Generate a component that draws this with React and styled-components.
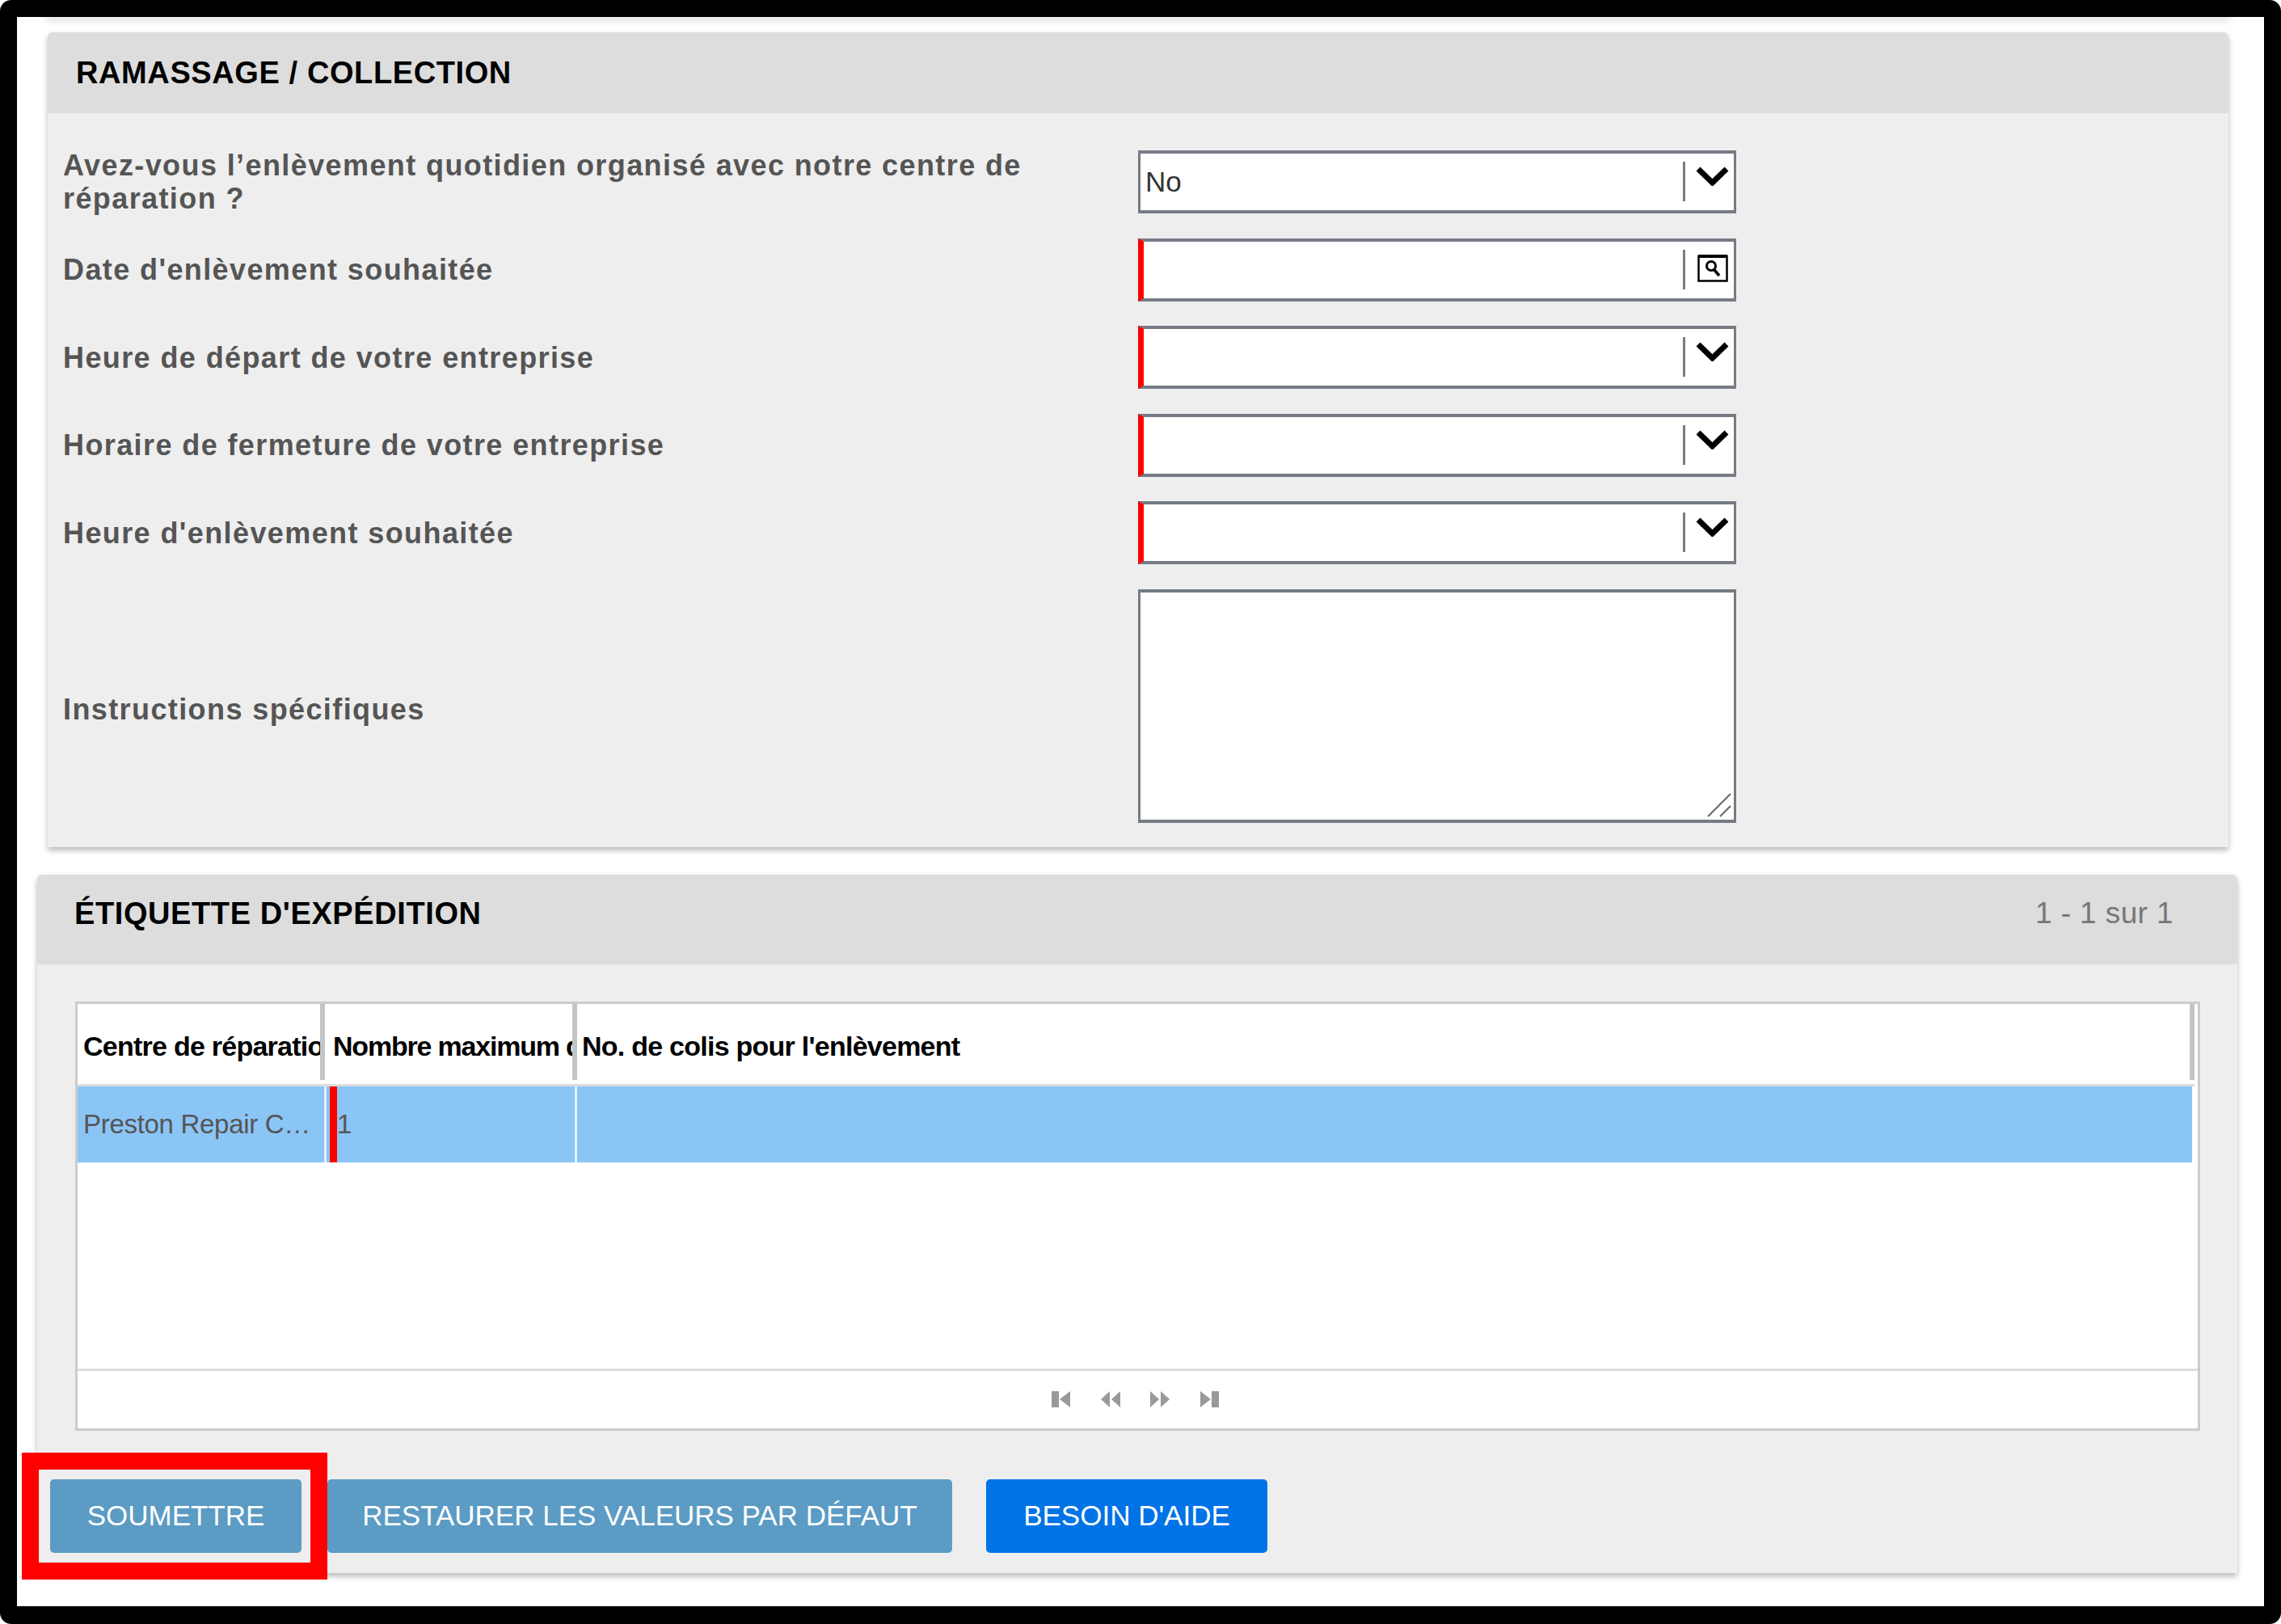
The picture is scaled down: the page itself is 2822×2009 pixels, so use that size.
import React from 'react';
import styled, { createGlobalStyle } from 'styled-components';

const Global = createGlobalStyle`
  html, body { margin: 0; padding: 0; background: #fff; }
  body { font-family: "Liberation Sans", Arial, sans-serif; }
  * { box-sizing: border-box; }
`;

const Frame = styled.div`
  position: relative;
  width: 2822px;
  height: 2009px;
  background: #fff;
  border: solid #000;
  border-width: 21px 21px 22px 21px;
  border-radius: 14px;
  overflow: hidden;
`;

const PrevPanelEdge = styled.div`
  height: 0;
  margin: 0 44px 19px 38px;
  box-shadow: 0 2px 9px 2px rgba(0, 0, 0, 0.22);
`;

const Panel = styled.section`
  margin: ${p => p.$wide ? '34px 33px 0 25px' : '0 44px 0 38px'};
  background: #eee;
  border-radius: 6px 6px 0 0;
  box-shadow: 0 4px 7px rgba(0, 0, 0, 0.28);
`;

const PanelHeader = styled.header`
  display: flex;
  align-items: center;
  justify-content: space-between;
  height: ${p => p.$wide ? '111px' : '100px'};
  padding: ${p => p.$wide ? '0 79px 14px 46px' : '0 0 0 35px'};
  background: #ddd;
  border-radius: 6px 6px 0 0;
`;

const PanelTitle = styled.h2`
  margin: 0;
  font-size: 38px;
  font-weight: 700;
  color: #000;
  letter-spacing: 0.6px;
  white-space: nowrap;
`;

const PageCount = styled.span`
  font-size: 37px;
  letter-spacing: 0.4px;
  color: #777;
  white-space: nowrap;
`;

const FormGrid = styled.div`
  display: grid;
  grid-template-columns: 1330px 740px;
  grid-template-rows: repeat(5, 78px) auto;
  row-gap: 30.5px;
  align-items: center;
  padding: 46px 0 30px 19px;
`;

const Label = styled.label`
  font-size: 36px;
  line-height: 41px;
  font-weight: 700;
  color: #555;
  letter-spacing: 1.4px;
  padding-right: 40px;
  padding-top: ${p => p.$drop || 0}px;
`;

const Field = styled.div`
  display: flex;
  align-items: flex-start;
  height: 78px;
  background: #fff;
  border: solid #767b85;
  border-width: 4px 3px;
  border-left: ${p => p.$required ? '7px solid #f00' : '3px solid #767b85'};
`;

const FieldValue = styled.div`
  flex: 1;
  align-self: center;
  padding-left: ${p => p.$required ? '2px' : '6px'};
  font-size: 35px;
  color: #333;
`;

const FieldDivider = styled.span`
  width: 3px;
  height: 49px;
  margin-top: 10px;
  background: #767b85;
`;

const IconSlot = styled.span`
  display: flex;
  justify-content: flex-start;
  width: 60px;
  padding: ${p => p.$top}px 0 0 ${p => p.$left}px;
`;

const TextBox = styled.div`
  position: relative;
  height: 289px;
  background: #fff;
  border: solid #767b85;
  border-width: 4px 3px;
`;

const Grip = styled.svg`
  position: absolute;
  right: 2px;
  bottom: 2px;
`;

const GridBox = styled.div`
  display: flex;
  flex-direction: column;
  height: 531px;
  margin: 46px 46px 0 47px;
  background: #fff;
  border: 3px solid #ccc;
`;

const HeadRow = styled.div`
  display: flex;
  height: 102px;
  margin-right: 4px;
  border-bottom: 3px solid #ddd;
`;

const HeadCell = styled.div`
  flex: ${p => p.$width ? `0 0 ${p.$width}px` : '1'};
  height: 94px;
  padding: 12px 0 0 ${p => p.$pad}px;
  display: flex;
  align-items: center;
  overflow: hidden;
  white-space: nowrap;
  font-size: 34px;
  letter-spacing: ${p => p.$tight ? '-1.2px' : '-0.75px'};
  font-weight: 700;
  color: #000;
  border-right: 6px solid #c4c4c4;
`;

const DataRow = styled.div`
  display: flex;
  height: 94px;
  margin-right: 7px;
  background: #8bc5f6;
`;

const DataCell = styled.div`
  flex: ${p => p.$width ? `0 0 ${p.$width}px` : '1'};
  display: flex;
  align-items: center;
  min-width: 0;
  border-right: ${p => p.$last ? '0' : '3px solid #e6f0fa'};
  border-left: ${p => p.$required ? '9px solid #f00' : '0'};
  margin-left: ${p => p.$required ? '4px' : '0'};
  padding-left: ${p => p.$pad}px;
  font-size: 33px;
  letter-spacing: -0.3px;
  color: #555;
`;

const CellText = styled.span`
  display: block;
  overflow: hidden;
  white-space: nowrap;
  text-overflow: ellipsis;
  padding-right: 6px;
`;

const GridBody = styled.div`
  flex: 1;
`;

const Pager = styled.div`
  display: flex;
  align-items: center;
  justify-content: center;
  gap: 35px;
  height: 74px;
  padding-right: 7px;
  border-top: 3px solid #ddd;
`;

const Actions = styled.div`
  display: flex;
  align-items: stretch;
  padding: 60px 0 25px 16px;
`;

const Button = styled.button`
  height: 91px;
  margin-right: ${p => p.$gap}px;
  padding: 0;
  width: ${p => p.$width}px;
  border: 0;
  border-radius: 5px;
  background: ${p => p.$primary ? '#0073e6' : '#5b9bc4'};
  color: #fff;
  font-family: inherit;
  font-size: 35px;
  white-space: nowrap;
`;

const Callout = styled.div`
  position: absolute;
  left: 6px;
  top: 1776px;
  width: 378px;
  height: 157px;
  border: 21px solid #f00;
  pointer-events: none;
`;

const Chevron = () => (
  <svg width="41" height="24" viewBox="0 0 41 24">
    <path d="M3 3 L20.5 20 L38 3" fill="none" stroke="#000" strokeWidth="7" />
  </svg>
);

const Lookup = () => (
  <svg width="38" height="35" viewBox="0 0 38 35">
    <rect x="1.5" y="3" width="35" height="30.5" fill="#fff" stroke="#000" strokeWidth="2.5" />
    <rect x="1" y="1" width="36" height="4" fill="#000" />
    <circle cx="17" cy="15" r="5.5" fill="none" stroke="#000" strokeWidth="3" />
    <path d="M21 20 L27 27" stroke="#000" strokeWidth="3.5" />
  </svg>
);

const PagerIcon = ({ points, bar }) => (
  <svg width="26" height="20" viewBox="0 0 26 20" fill="#9a9a9a">
    {bar != null && <rect x={bar} y="0" width="9" height="20" />}
    {points.map(p => <polygon key={p} points={p} />)}
  </svg>
);

const selects = [
  { label: 'Date d\'enlèvement souhaitée', icon: 'lookup', required: true },
  { label: 'Heure de départ de votre entreprise', icon: 'chevron', required: true },
  { label: 'Horaire de fermeture de votre entreprise', icon: 'chevron', required: true },
  { label: 'Heure d\'enlèvement souhaitée', icon: 'chevron', required: true },
];

export default function App() {
  return (
    <>
      <Global />
      <Frame>
        <PrevPanelEdge />
        <Panel>
          <PanelHeader>
            <PanelTitle>RAMASSAGE / COLLECTION</PanelTitle>
          </PanelHeader>
          <FormGrid>
            <Label>Avez-vous l’enlèvement quotidien organisé avec notre centre de réparation ?</Label>
            <Field>
              <FieldValue>No</FieldValue>
              <FieldDivider />
              <IconSlot $top={16} $left={13}><Chevron /></IconSlot>
            </Field>
            {selects.map(s => (
              <React.Fragment key={s.label}>
                <Label>{s.label}</Label>
                <Field $required={s.required}>
                  <FieldValue $required={s.required} />
                  <FieldDivider />
                  {s.icon === 'lookup'
                    ? <IconSlot $top={15} $left={15}><Lookup /></IconSlot>
                    : <IconSlot $top={16} $left={13}><Chevron /></IconSlot>}
                </Field>
              </React.Fragment>
            ))}
            <Label $drop={8}>Instructions spécifiques</Label>
            <TextBox>
              <Grip width="32" height="32" viewBox="0 0 32 32">
                <path d="M2 30 L30 2 M17 30 L30 17" stroke="#666" strokeWidth="2" fill="none" />
              </Grip>
            </TextBox>
          </FormGrid>
        </Panel>
        <Panel $wide>
          <PanelHeader $wide>
            <PanelTitle>ÉTIQUETTE D'EXPÉDITION</PanelTitle>
            <PageCount>1 - 1 sur 1</PageCount>
          </PanelHeader>
          <GridBox>
            <HeadRow>
              <HeadCell $width={306} $pad={7}>Centre de réparation</HeadCell>
              <HeadCell $width={312} $pad={10} $tight>Nombre maximum de colis</HeadCell>
              <HeadCell $pad={6}>No. de colis pour l'enlèvement</HeadCell>
            </HeadRow>
            <DataRow>
              <DataCell $width={308} $pad={7}><CellText>Preston Repair Centre</CellText></DataCell>
              <DataCell $width={306} $pad={0} $required>1</DataCell>
              <DataCell $last />
            </DataRow>
            <GridBody />
            <Pager>
              <PagerIcon bar={1} points={['24,0 11,10 24,20']} />
              <PagerIcon points={['12,0 1,10 12,20', '25,0 14,10 25,20']} />
              <PagerIcon points={['1,0 12,10 1,20', '14,0 25,10 14,20']} />
              <PagerIcon bar={16} points={['2,0 15,10 2,20']} />
            </Pager>
          </GridBox>
          <Actions>
            <Button $width={311} $gap={32}>SOUMETTRE</Button>
            <Button $width={773} $gap={42}>RESTAURER LES VALEURS PAR DÉFAUT</Button>
            <Button $width={348} $gap={0} $primary>BESOIN D'AIDE</Button>
          </Actions>
        </Panel>
        <Callout />
      </Frame>
    </>
  );
}
